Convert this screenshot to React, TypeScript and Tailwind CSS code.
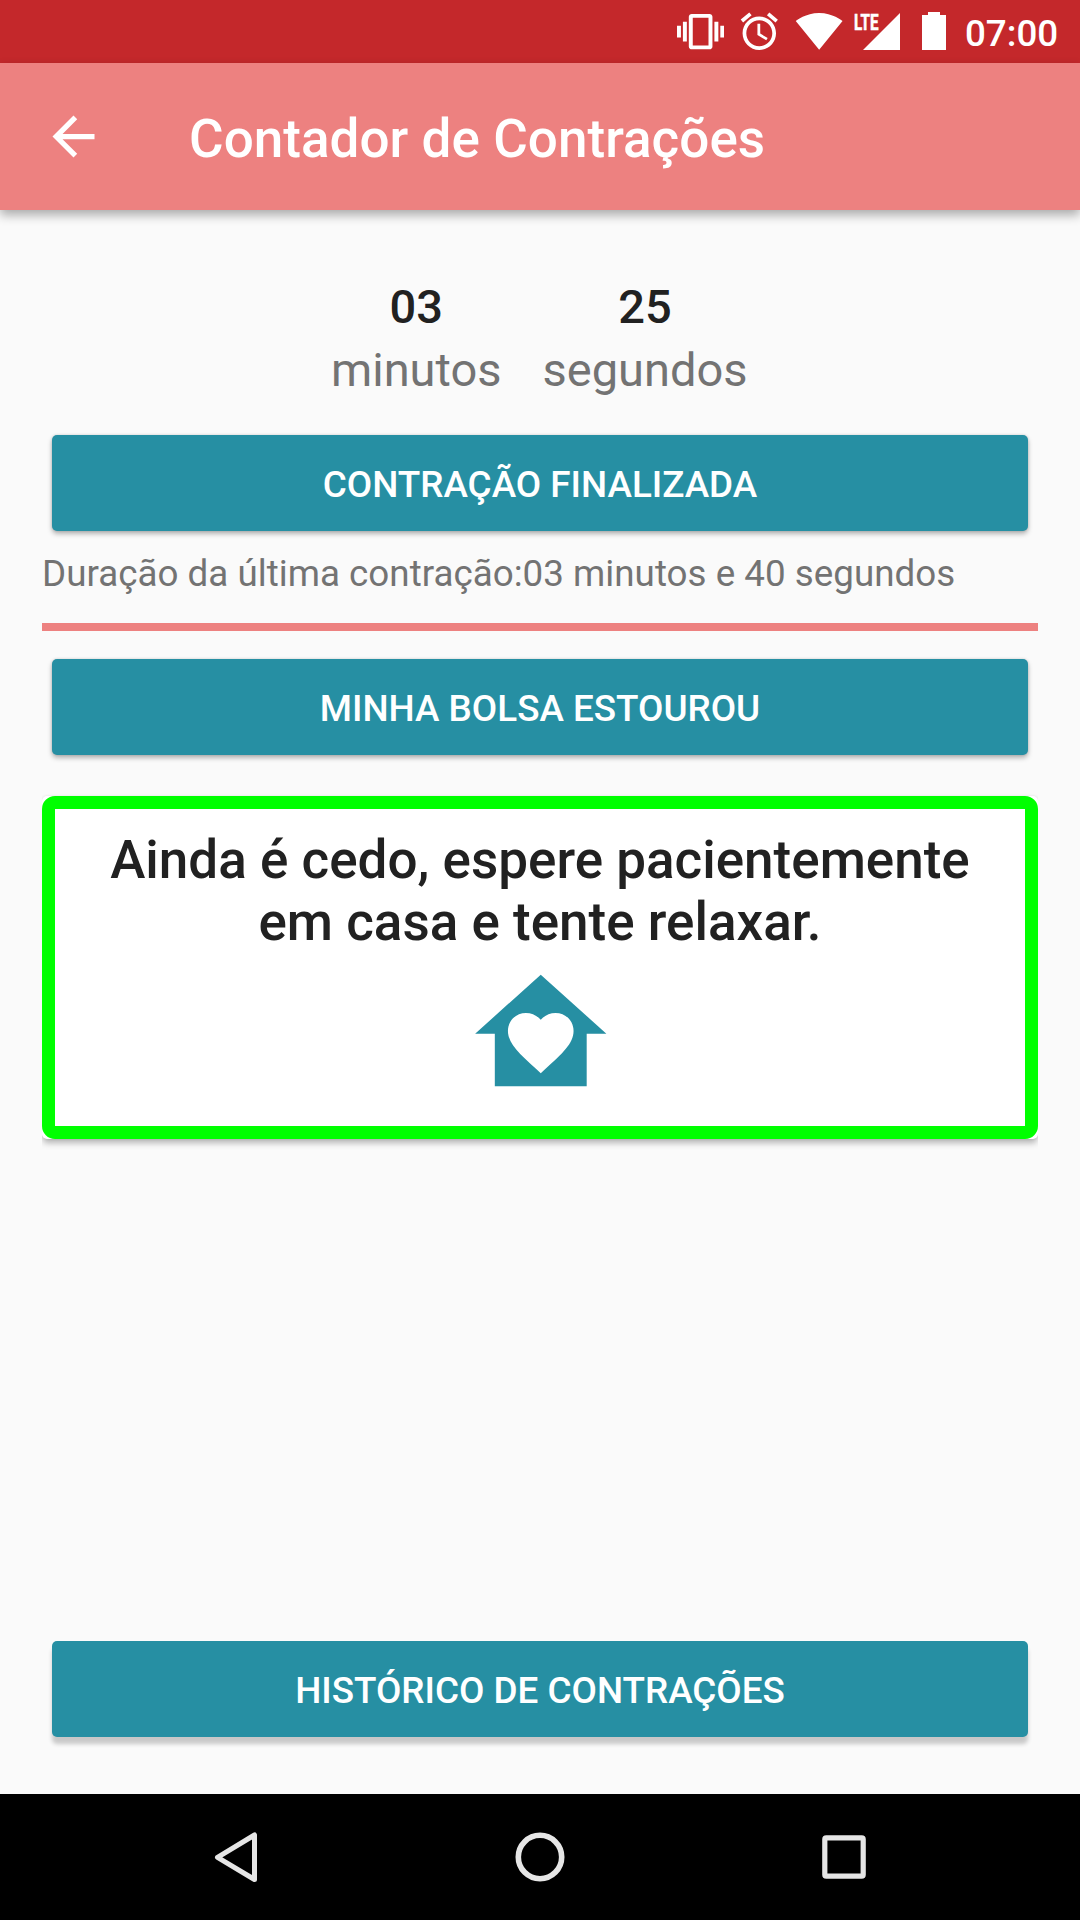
import type { ReactNode } from "react";

type ActionButtonProps = {
  children: ReactNode;
  raised?: boolean;
};

const timer = [
  { value: "03", unit: "minutos" },
  { value: "25", unit: "segundos" },
];

function StatusBar() {
  return (
    <div className="flex h-[63px] items-start bg-[#c4282b] pl-[677px] text-white">
      <svg className="mt-[7.9px] size-[47.25px] shrink-0" viewBox="0 0 24 24" fill="currentColor">
        <path d="M0 15h2V9H0v6zm3 2h2V7H3v10zm19-8v6h2V9h-2zm-3 8h2V7h-2v10zM16.5 3h-9C6.67 3 6 3.67 6 4.5v15c0 .83.67 1.5 1.5 1.5h9c.83 0 1.5-.67 1.5-1.5v-15c0-.83-.67-1.5-1.5-1.5zM16 19H8V5h8v14z" />
      </svg>
      <svg className="mt-[9.1px] ml-[13px] size-[44.6px] shrink-0" viewBox="0 0 24 24" fill="currentColor">
        <path d="M22 5.72l-4.6-3.86-1.29 1.53 4.6 3.86L22 5.72zM7.88 3.39L6.6 1.86 2 5.71l1.29 1.53 4.59-3.85zM12.5 8H11v6l4.75 2.85.75-1.23-4-2.37V8zM12 4c-4.97 0-9 4.03-9 9s4.02 9 9 9c4.97 0 9-4.03 9-9s-4.03-9-9-9zm0 16c-3.87 0-7-3.13-7-7s3.13-7 7-7 7 3.13 7 7-3.13 7-7 7z" />
      </svg>
      <svg className="mt-[9.1px] ml-[13px] h-[44.6px] w-[48.3px] shrink-0" viewBox="0 0 26 24" fill="currentColor">
        <path d="M13 22L25.6 6.5C25.1 6.1 20.3 2.1 13 2.1S.9 6.1.4 6.5L13 22z" />
      </svg>
      <svg className="ml-[10.85px] h-[63px] w-[48px] shrink-0" viewBox="0 0 48 63" fill="currentColor">
        <path d="M9 50H46V13z" />
        <text
          x="0"
          y="29.8"
          textLength="24.5"
          lengthAdjust="spacingAndGlyphs"
          stroke="currentColor"
          strokeWidth="0.6"
          className="font-['Roboto'] text-[22px] font-bold"
        >
          LTE
        </text>
      </svg>
      <svg className="ml-5 h-[63px] w-6 shrink-0" viewBox="0 0 24 63" fill="currentColor">
        <path d="M6 12h12v3h6v35H0V15h6z" />
      </svg>
      <span className="ml-[19px] pt-3 text-[36.75px] leading-[43px] font-medium">07:00</span>
    </div>
  );
}

function Toolbar() {
  return (
    <header className="flex h-[147px] items-center bg-[#ed8180] pl-[42px] text-white shadow-[0_5px_10px_rgba(0,0,0,0.32)]">
      <svg className="size-[63px]" viewBox="0 0 24 24" fill="currentColor">
        <path d="M20 11H7.83l5.59-5.59L12 4l-8 8 8 8 1.41-1.41L7.83 13H20v-2z" />
      </svg>
      <h1 className="pt-1 pl-[84px] text-[53px] leading-[62px] font-medium tracking-[0.04px]">
        Contador de Contrações
      </h1>
    </header>
  );
}

function ActionButton({ children, raised = false }: ActionButtonProps) {
  return (
    <button
      className={`mx-2.5 flex h-24 shrink-0 items-center justify-center rounded-[5px] bg-[#268fa3] pt-[3px] text-[36.85px] leading-[43px] font-medium text-white uppercase ${
        raised
          ? "shadow-[0_7px_4px_rgba(0,0,0,0.2)]"
          : "shadow-[0_3px_5px_rgba(0,0,0,0.28),0_0_3px_rgba(0,0,0,0.15)]"
      }`}
    >
      {children}
    </button>
  );
}

function HomeHeart() {
  return (
    <svg className="size-[157.5px]" viewBox="0 0 24 24" fill="#268fa3">
      <path d="M12 3L2 12H5V20H19V12H22L12 3M12 18L11.27 17.34C8.7 15 7 13.46 7 11.57C7 10.03 8.21 8.82 9.75 8.82C10.62 8.82 11.45 9.23 12 9.87C12.55 9.23 13.38 8.82 14.25 8.82C15.79 8.82 17 10.03 17 11.57C17 13.46 15.3 15 12.73 17.34L12 18Z" />
    </svg>
  );
}

function AdviceCard() {
  return (
    <section className="mt-[41px] h-[343px] rounded-[5px] bg-white shadow-[0_5px_6px_-1px_rgba(0,0,0,0.28),0_0_3px_rgba(0,0,0,0.1)] [clip-path:inset(-10px_0_-20px_0)]">
      <div className="flex h-full flex-col items-center rounded-[13px] border-[13px] border-[#00ff00] pt-5 text-center">
        <p className="text-[53px] leading-[62px] font-medium text-[#212121]">
          Ainda é cedo, espere pacientemente
          <br />
          em casa e tente relaxar.
        </p>
        <div className="mt-[2.4px] pl-[0.5px]">
          <HomeHeart />
        </div>
      </div>
    </section>
  );
}

function NavigationBar() {
  return (
    <nav className="flex h-[126px] items-center justify-between px-[204px] text-[#e6e6e6]">
      <svg className="size-16" viewBox="0 0 64 64" fill="none" stroke="currentColor" strokeWidth="5" strokeLinejoin="round">
        <path d="M13.5 32.3L50.5 10V54.5z" />
      </svg>
      <svg className="size-16" viewBox="0 0 64 64" fill="none" stroke="currentColor" strokeWidth="5.6">
        <circle cx="32" cy="32" r="21.7" />
      </svg>
      <svg className="size-16" viewBox="0 0 64 64" fill="none" stroke="currentColor" strokeWidth="5.2">
        <rect x="12.8" y="12.8" width="38.4" height="38.4" rx="1.5" />
      </svg>
    </nav>
  );
}

export default function App() {
  return (
    <div className="flex h-[1920px] w-[1080px] flex-col overflow-hidden bg-black font-['Roboto',sans-serif]">
      <StatusBar />
      <div className="flex h-[1731px] flex-col bg-[#fafafa]">
        <Toolbar />
        <main className="flex flex-1 flex-col px-[42px] pt-[65px] pb-[57px]">
          <div className="flex justify-center gap-[41px] pr-[1.5px] text-center text-[47px] leading-[63px]">
            {timer.map((part) => (
              <div key={part.unit}>
                <p className="font-medium text-[#212121]">{part.value}</p>
                <p className="text-[#737373]">{part.unit}</p>
              </div>
            ))}
          </div>
          <div className="mt-[34px] flex flex-col">
            <ActionButton>Contração finalizada</ActionButton>
          </div>
          <p className="mt-[21px] text-[36.75px] leading-[43px] tracking-[0.02px] text-[#737373]">
            Duração da última contração:03 minutos e 40 segundos
          </p>
          <div className="mt-7 mb-7 h-2 bg-[#ed8180]" />
          <ActionButton>Minha bolsa estourou</ActionButton>
          <AdviceCard />
          <div className="mt-auto flex flex-col">
            <ActionButton raised>Histórico de contrações</ActionButton>
          </div>
        </main>
      </div>
      <NavigationBar />
    </div>
  );
}
